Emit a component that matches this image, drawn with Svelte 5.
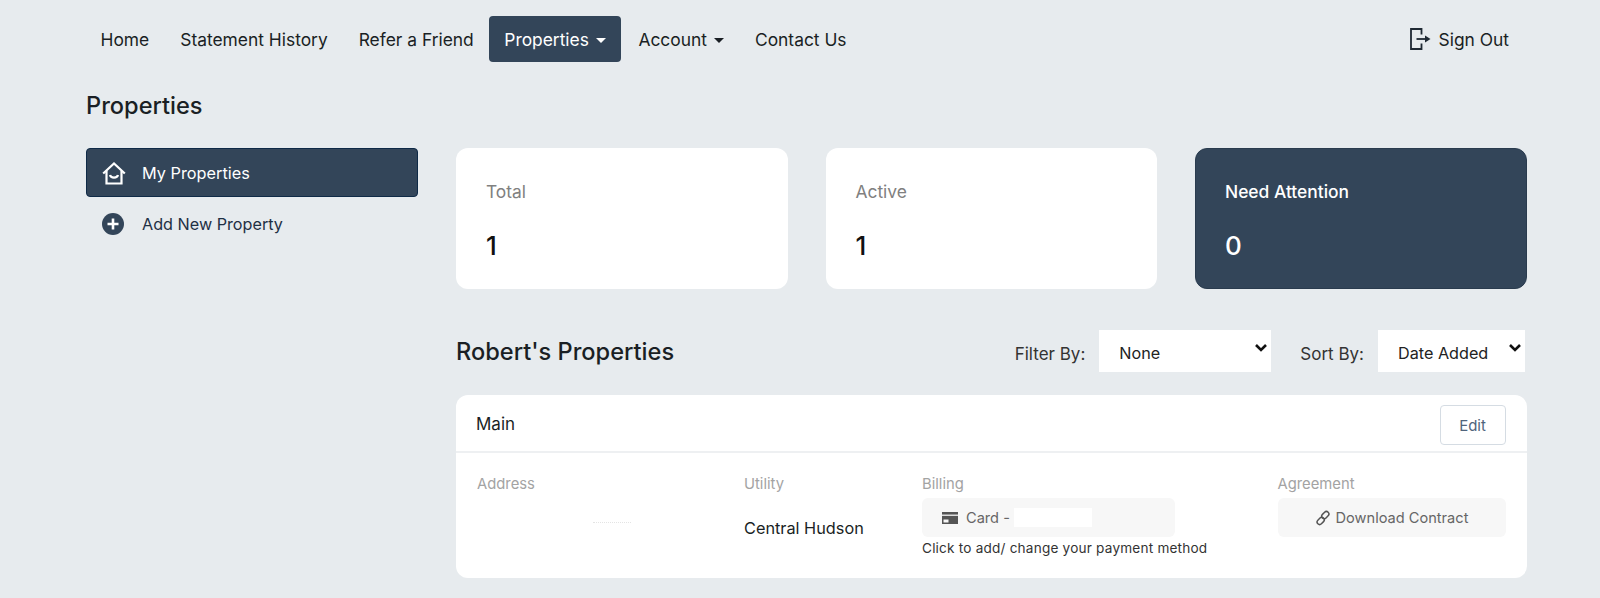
<script>
  const links = [
    { label: 'Home' },
    { label: 'Statement History' },
    { label: 'Refer a Friend' },
    { label: 'Properties', caret: true, active: true },
    { label: 'Account', caret: true },
    { label: 'Contact Us' }
  ];
  const stats = [
    { label: 'Total', value: 1 },
    { label: 'Active', value: 1 },
    { label: 'Need Attention', value: 0, dark: true }
  ];
</script>

<div class="page">
  <nav class="topnav">
    <ul>
      {#each links as link}
        <li class="nav-item" class:active={link.active}>
          {link.label}
          {#if link.caret}<span class="caret"></span>{/if}
        </li>
      {/each}
    </ul>
    <div class="signout">
      <svg width="22" height="22" viewBox="0 0 22 22" fill="none" stroke="#1f2933" stroke-width="1.800">
        <path d="M12.500 6.500V1H2v20h10.500v-5.500" />
        <path d="M7.500 11h9" />
        <path d="M16 7.500 21.500 11 16 14.500z" fill="#1f2933" stroke="none" />
      </svg>
      Sign Out
    </div>
  </nav>

  <h1>Properties</h1>

  <div class="layout">
    <aside>
      <div class="side-item current">
        <svg width="24" height="24" viewBox="0 0 24 24" fill="none" stroke="#fff" stroke-width="2.200">
          <path d="M1.200 12.500 12 2.500l10.800 10" />
          <path d="M4.500 10v12.500h15V10" />
          <path d="M8 14c.8 3.400 7.200 3.400 8 0" />
        </svg>
        My Properties
      </div>
      <div class="side-item add">
        <svg width="24" height="24" viewBox="0 0 24 24">
          <circle cx="12" cy="12" r="11" fill="#334559" />
          <path d="M12 6.500v11M6.500 12h11" stroke="#fff" stroke-width="2.600" />
        </svg>
        Add New Property
      </div>
    </aside>

    <main>
      <section class="stats">
        {#each stats as stat}
          <div class="stat" class:dark={stat.dark}>
            <div class="stat-label">{stat.label}</div>
            <div class="stat-value">{stat.value}</div>
          </div>
        {/each}
      </section>

      <section class="list-head">
        <h2>Robert's Properties</h2>
        <div class="filters">
          <span class="filter-label">Filter By:</span>
          <div class="select filter-select">None
            <svg class="chev" width="14" height="10" viewBox="0 0 14 10" fill="none" stroke="#111" stroke-width="2.600"><path d="M2 2l5 5 5-5" /></svg>
          </div>
          <span class="filter-label sort">Sort By:</span>
          <div class="select sort-select">Date Added
            <svg class="chev" width="14" height="10" viewBox="0 0 14 10" fill="none" stroke="#111" stroke-width="2.600"><path d="M2 2l5 5 5-5" /></svg>
          </div>
        </div>
      </section>

      <section class="card">
        <header>
          <span class="card-title">Main</span>
          <button class="edit">Edit</button>
        </header>
        <div class="card-body">
          <div class="col">
            <div class="field-label">Address</div>
            <div class="address-dots"></div>
          </div>
          <div class="col">
            <div class="field-label">Utility</div>
            <div class="utility">Central Hudson</div>
          </div>
          <div class="col">
            <div class="field-label">Billing</div>
            <div class="pill billing">
              <svg width="16" height="12" viewBox="0 0 16 12">
                <rect width="16" height="12" fill="#555" />
                <rect y="2.500" width="16" height="1.500" fill="#ddd" />
                <rect x="1.500" y="7.500" width="5" height="3" fill="#f7f7f7" />
              </svg>
              Card -
              <span class="masked"></span>
            </div>
            <div class="hint">Click to add/ change your payment method</div>
          </div>
          <div class="col">
            <div class="field-label">Agreement</div>
            <div class="pill contract">
              <svg width="16" height="16" viewBox="0 0 16 16" fill="none" stroke="#555" stroke-width="1.500">
                <rect x="6.300" y="2.600" width="8" height="5" rx="2.500" transform="rotate(-45 10.300 5.100)" />
                <rect x="1.700" y="8.400" width="8" height="5" rx="2.500" transform="rotate(-45 5.700 10.900)" />
              </svg>
              Download Contract
            </div>
          </div>
        </div>
      </section>
    </main>
  </div>
</div>

<style>
  :global(body) {
    margin: 0;
    background: #e7ebee;
    font-family: Inter, "Liberation Sans", sans-serif;
    color: #1a1f24;
  }

  .page {
    height: 598px;
    overflow: hidden;
    padding: 16px 73px 0 86px;
    box-sizing: border-box;
  }

  .topnav {
    display: flex;
    justify-content: space-between;
    align-items: center;
    height: 46px;
  }

  ul {
    display: flex;
    align-items: center;
    list-style: none;
    margin: 0 0 0 -1px;
    padding: 0;
  }

  .nav-item {
    display: flex;
    align-items: center;
    height: 46px;
    padding: 0 15.500px;
    font-size: 17.400px;
    border-radius: 4px;
    white-space: nowrap;
  }

  .nav-item.active {
    padding: 0 15px;
    margin-right: 2px;
    background: #334559;
    color: #fff;
  }

  .caret {
    width: 0;
    height: 0;
    margin-left: 7px;
    margin-top: 2px;
    border-left: 5px solid transparent;
    border-right: 5px solid transparent;
    border-top: 5px solid currentColor;
  }

  .signout {
    display: flex;
    align-items: center;
    gap: 8px;
    padding-right: 18px;
    font-size: 17.400px;
  }

  h1 {
    margin: 30px 0 0;
    height: 28px;
    font-size: 23.600px;
    line-height: 28px;
    font-weight: 500;
  }

  .layout {
    display: grid;
    grid-template-columns: 332px 1070.500px;
    column-gap: 38px;
    margin-top: 28px;
  }

  .side-item {
    display: flex;
    align-items: center;
    gap: 16px;
    height: 49px;
    padding: 0 15px;
    box-sizing: border-box;
    font-size: 16.300px;
    color: #1f3044;
    margin-bottom: 2px;
  }

  .side-item.add {
    gap: 17px;
    font-size: 16.200px;
  }

  .side-item.current {
    background: #334559;
    border: 1px solid #0f2a47;
    border-radius: 4px;
    color: #fff;
  }

  .stats {
    display: grid;
    grid-template-columns: repeat(3, 1fr);
    column-gap: 38px;
  }

  .stat {
    height: 141px;
    box-sizing: border-box;
    padding: 34px 30px 0;
    background: #fff;
    border-radius: 12px;
  }

  .stat-label {
    font-size: 17.400px;
    line-height: 20px;
    color: #808080;
  }

  .stat-value {
    margin-top: 28px;
    font-size: 26px;
    line-height: 32px;
    font-weight: 500;
    color: #111;
  }

  .stat.dark {
    background: #334559;
    border: 1px solid #2a3b4e;
    padding: 33px 29px 0;
  }

  .stat.dark .stat-label {
    font-weight: 500;
    color: #fff;
  }

  .stat.dark .stat-value {
    color: #fff;
  }

  .list-head {
    display: flex;
    justify-content: space-between;
    align-items: center;
    height: 42px;
    margin-top: 41px;
  }

  h2 {
    margin: 0;
    font-size: 23.600px;
    font-weight: 500;
  }

  .filters {
    display: flex;
    align-items: center;
    margin-right: 1.500px;
  }

  .filter-label {
    margin: 6px 14px 0 0;
    font-size: 17px;
    color: #333;
  }

  .filter-label.sort {
    margin-left: 29px;
  }

  .select {
    position: relative;
    height: 42px;
    box-sizing: border-box;
    padding-left: 20px;
    background: #fff;
    font-size: 16.200px;
    line-height: 47px;
    color: #222;
  }

  .filter-select {
    width: 172px;
  }

  .sort-select {
    width: 147px;
  }

  .chev {
    position: absolute;
    right: 3px;
    top: 13px;
  }

  .card {
    margin-top: 23px;
    height: 183px;
    background: #fff;
    border-radius: 12px;
  }

  .card header {
    display: flex;
    justify-content: space-between;
    align-items: center;
    height: 58px;
    box-sizing: border-box;
    padding: 4px 21px 0 20px;
    border-bottom: 2px solid #eef0f2;
  }

  .card-title {
    margin-top: -2px;
    font-size: 17px;
  }

  .edit {
    width: 66px;
    height: 40px;
    background: #fff;
    border: 1px solid #d5dce3;
    border-radius: 4px;
    font: inherit;
    font-size: 15px;
    color: #50647c;
  }

  .card-body {
    display: grid;
    grid-template-columns: 267px 178px 355.500px 228px;
    padding: 21px 21px 0 21px;
  }

  .field-label {
    font-size: 14.800px;
    line-height: 20px;
    color: #a3a3a3;
  }

  .address-dots {
    width: 38px;
    margin: 28px 0 0 116px;
    border-bottom: 1px dotted #e4e4e4;
  }

  .utility {
    margin-top: 24px;
    font-size: 16.300px;
    line-height: 20px;
  }

  .pill {
    display: flex;
    align-items: center;
    height: 39px;
    margin-top: 4px;
    background: #f7f7f7;
    border-radius: 6px;
    font-size: 14.600px;
    color: #666;
  }

  .billing {
    width: 253px;
    gap: 8px;
    padding-left: 20px;
    box-sizing: border-box;
  }

  .masked {
    width: 78px;
    height: 19px;
    background: #fff;
    margin-left: -4px;
  }

  .contract {
    justify-content: center;
    gap: 5px;
  }

  .hint {
    margin-top: 2px;
    font-size: 13.600px;
    line-height: 18px;
    letter-spacing: 0.2px;
    color: #333;
  }
</style>
